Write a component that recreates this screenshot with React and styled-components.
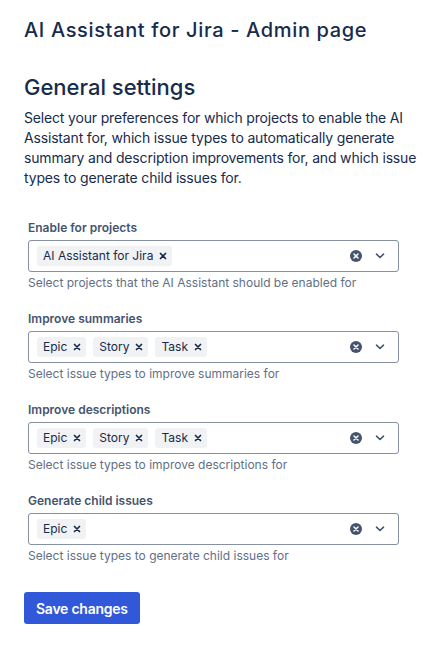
import React from "react"
import styled, { createGlobalStyle } from "styled-components"

const colors = {
  text: "#172B4D",
  label: "#44546F",
  subtle: "#626F86",
  border: "#8590A2",
  chip: "#F1F2F4",
  icon: "#44546F",
  brand: "#3158D9",
}

const fields = [
  {
    label: "Enable for projects",
    values: ["AI Assistant for Jira"],
    helper: "Select projects that the AI Assistant should be enabled for",
  },
  {
    label: "Improve summaries",
    values: ["Epic", "Story", "Task"],
    helper: "Select issue types to improve summaries for",
  },
  {
    label: "Improve descriptions",
    values: ["Epic", "Story", "Task"],
    helper: "Select issue types to improve descriptions for",
  },
  {
    label: "Generate child issues",
    values: ["Epic"],
    helper: "Select issue types to generate child issues for",
  },
]

const GlobalStyle = createGlobalStyle`
  body {
    margin: 0;
    background: #ffffff;
    font-family: Inter, "Noto Sans", "Liberation Sans", sans-serif;
    color: ${colors.text};
  }
`

const RemoveIcon = () => (
  <svg width="8" height="8" viewBox="0 0 8 8">
    <path
      d="M1.5 1.5 L6.5 6.5 M6.5 1.5 L1.5 6.5"
      stroke={colors.text}
      strokeWidth="1.7"
      strokeLinecap="round"
    />
  </svg>
)

const ClearIcon = () => (
  <svg width="12" height="12" viewBox="0 0 12 12">
    <circle cx="6" cy="6" r="6" fill={colors.icon} />
    <path
      d="M4 4 L8 8 M8 4 L4 8"
      stroke="#fff"
      strokeWidth="1.5"
      strokeLinecap="round"
    />
  </svg>
)

const ChevronIcon = () => (
  <svg width="10" height="6" viewBox="0 0 10 6">
    <path
      d="M1.5 1.2 L5 4.5 L8.5 1.2"
      fill="none"
      stroke={colors.icon}
      strokeWidth="1.6"
      strokeLinecap="round"
      strokeLinejoin="round"
    />
  </svg>
)

const MultiSelect = ({ label, values, helper }) => (
  <Field>
    <Label>{label}</Label>
    <SelectBox>
      <Values>
        {values.map((value) => (
          <Chip key={value}>
            <span>{value}</span>
            <ChipRemove>
              <RemoveIcon />
            </ChipRemove>
          </Chip>
        ))}
      </Values>
      <Indicators>
        <Indicator>
          <ClearIcon />
        </Indicator>
        <Indicator>
          <ChevronIcon />
        </Indicator>
      </Indicators>
    </SelectBox>
    <Helper>{helper}</Helper>
  </Field>
)

const App = () => (
  <>
    <GlobalStyle />
    <Page>
      <Title>AI Assistant for Jira - Admin page</Title>
      <Heading>General settings</Heading>
      <Intro>
        Select your preferences for which projects to enable the AI Assistant
        for, which issue types to automatically generate summary and
        description improvements for, and which issue types to generate child
        issues for.
      </Intro>
      <Form>
        {fields.map((field) => (
          <MultiSelect key={field.label} {...field} />
        ))}
      </Form>
      <SaveButton type="button">Save changes</SaveButton>
    </Page>
  </>
)

const Page = styled.main`
  width: 398px;
  padding: 18px 0 24px 24px;
`

const Title = styled.h1`
  margin: 0;
  font-size: 20px;
  line-height: 24px;
  font-weight: 500;
  letter-spacing: 0.65px;
  color: ${colors.text};
`

const Heading = styled.h2`
  margin: 31px 0 0;
  font-size: 22px;
  line-height: 28px;
  font-weight: 500;
  color: ${colors.text};
`

const Intro = styled.p`
  margin: 7px 0 0;
  font-size: 14px;
  line-height: 20px;
  letter-spacing: -0.17px;
  color: ${colors.text};
`

const Form = styled.div`
  display: flex;
  flex-direction: column;
  gap: 20px;
  margin: 32px 0 0 4px;
`

const Field = styled.div`
  display: flex;
  flex-direction: column;
  width: 371px;
`

const Label = styled.label`
  font-size: 12px;
  line-height: 16px;
  font-weight: 600;
  color: ${colors.label};
  margin-bottom: 4px;
`

const SelectBox = styled.div`
  box-sizing: border-box;
  height: 32px;
  display: flex;
  align-items: center;
  border: 1px solid ${colors.border};
  border-radius: 3px;
  padding: 0 6px 0 8px;
`

const Values = styled.div`
  flex: 1;
  display: flex;
  align-items: center;
  gap: 7px;
`

const Chip = styled.div`
  display: flex;
  align-items: center;
  height: 20px;
  border-radius: 3px;
  background: ${colors.chip};
  padding-left: 6px;
  font-size: 12px;
  line-height: 16px;
  color: ${colors.text};
`

const ChipRemove = styled.span`
  display: flex;
  align-items: center;
  justify-content: center;
  width: 19px;
  height: 20px;
`

const Indicators = styled.div`
  display: flex;
  align-items: center;
`

const Indicator = styled.span`
  display: flex;
  align-items: center;
  justify-content: center;
  width: 24px;
  height: 24px;
`

const Helper = styled.div`
  margin-top: 3px;
  font-size: 12px;
  line-height: 16px;
  color: ${colors.subtle};
`

const SaveButton = styled.button`
  margin-top: 28px;
  height: 32px;
  padding: 0 12px;
  border: none;
  border-radius: 3px;
  background: ${colors.brand};
  color: #ffffff;
  font-family: inherit;
  font-size: 14px;
  font-weight: 600;
  letter-spacing: -0.25px;
  cursor: pointer;
`

export default App
